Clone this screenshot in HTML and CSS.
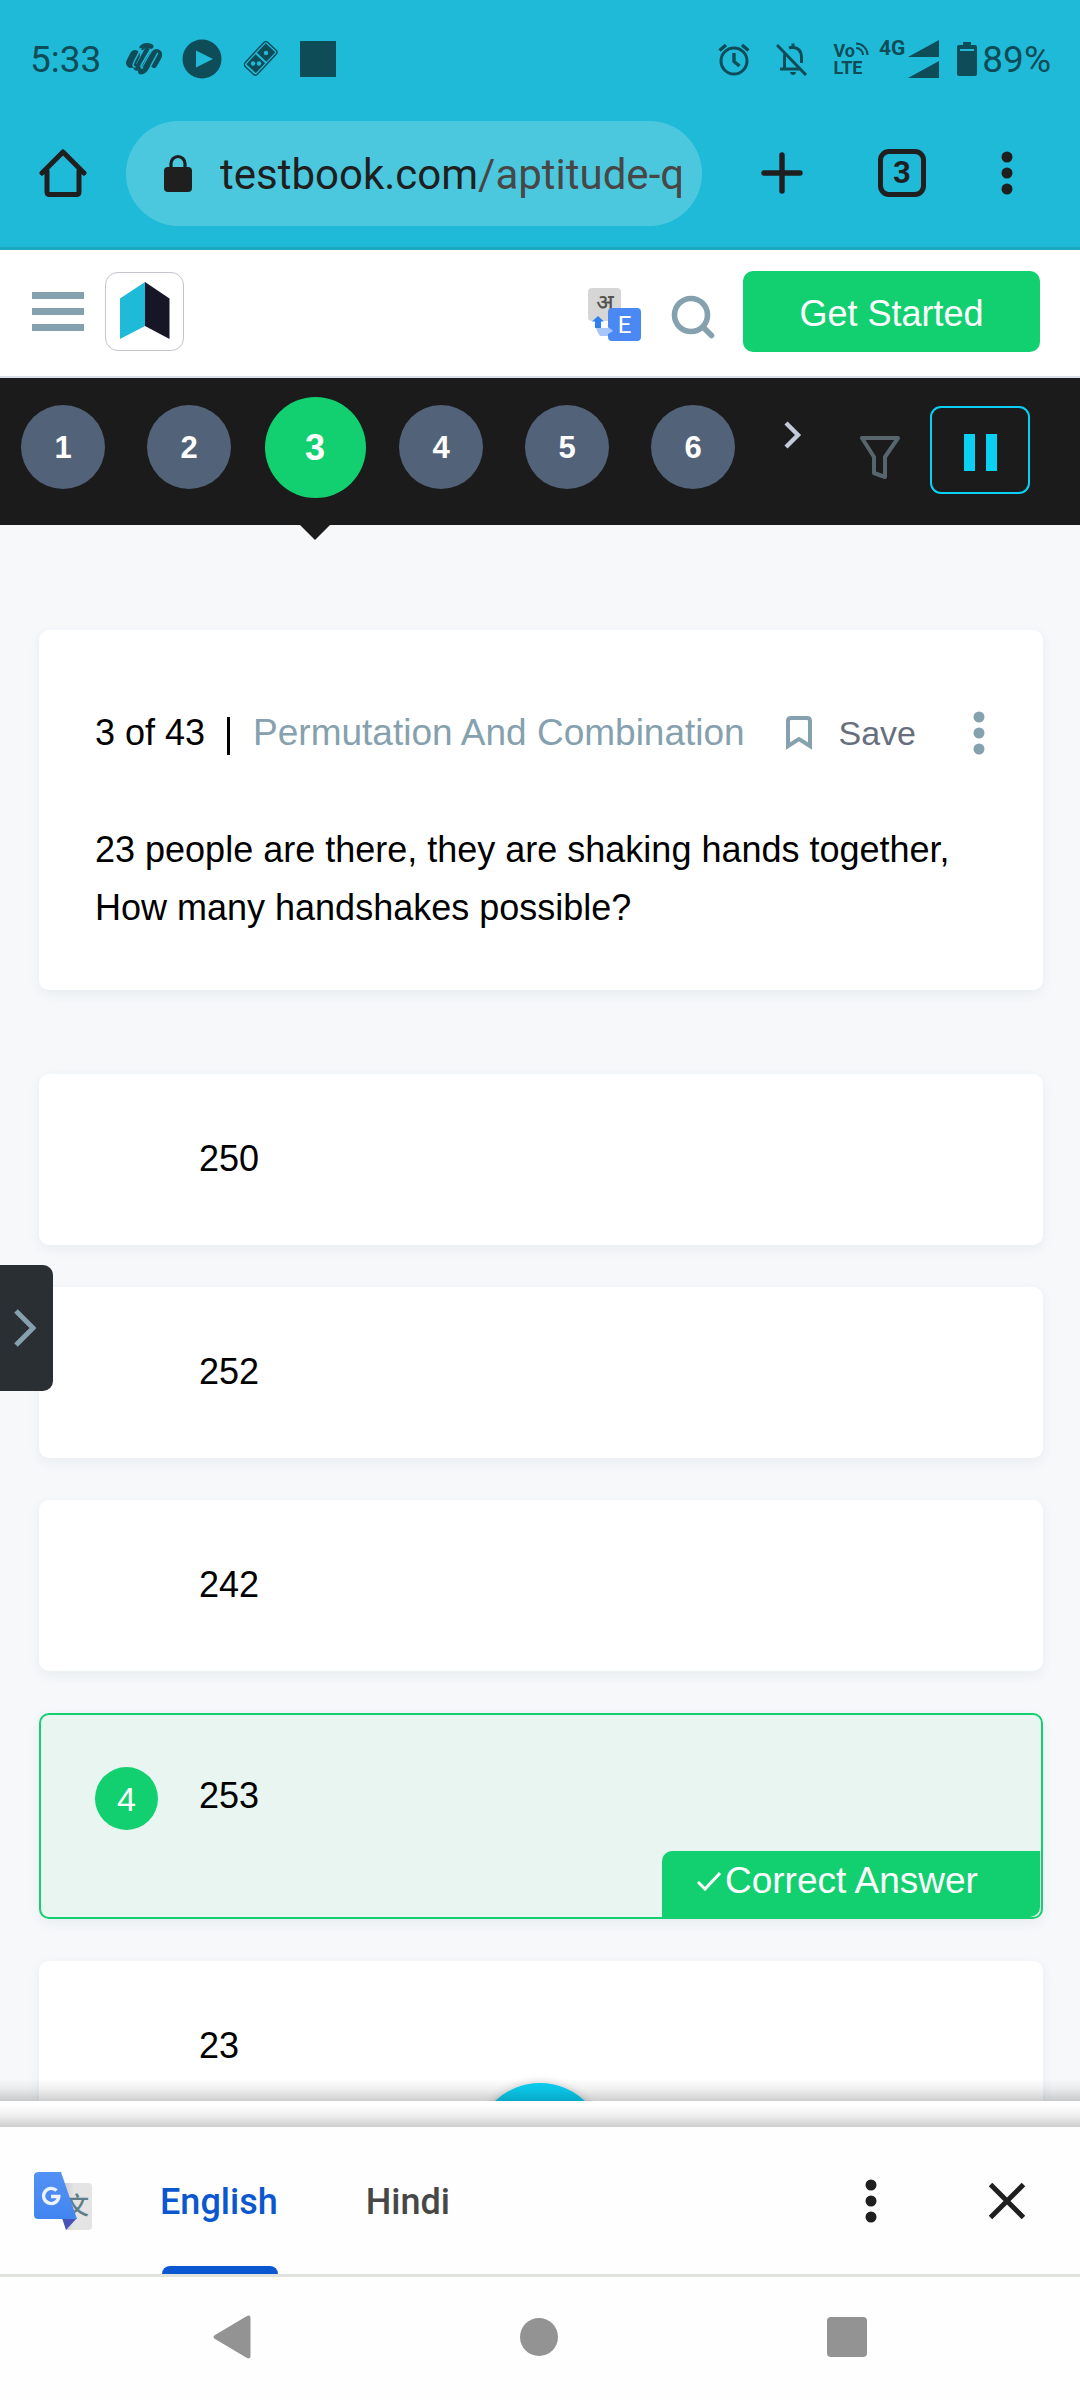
FILE: index.html
```html
<!DOCTYPE html>
<html lang="en">
<head>
<meta charset="utf-8">
<meta name="viewport" content="width=device-width, initial-scale=1">
<title>Permutation And Combination - Testbook</title>
<link rel="stylesheet" href="styles.css">
</head>
<body>
<div class="browser">
  <div class="status">
    <span class="clock">5:33</span>
    <svg class="status-swirl" width="36" height="32" viewBox="0 0 36 32" fill="none" stroke="currentColor" stroke-linecap="round" stroke-linejoin="round"><path d="M5 20 9 12" stroke-width="10"/><path d="M10 24q1 2 3-1L21 8" stroke-width="6"/><path d="M16 4.500q4-3.500 9-1" stroke-width="5"/><path d="M15 28.500q3 0 5-4L26.500 13q3-5 5.500-3.500t0 5.500L28 22" stroke-width="6"/><path d="M15 5.500 8.500 18q-3 6 .500 6M24.500 6.500 16.500 20q-3 5 0 5M31.500 10.500 25 22.500" stroke="#20bad9" stroke-width="1.500"/></svg>
    <svg class="status-play" width="40" height="40" viewBox="0 0 40 40"><circle cx="20" cy="20" r="19.500" fill="currentColor"/><path d="M14 11.500 31 20 14 28.500z" fill="#20bad9"/></svg>
    <svg class="status-domino" width="34" height="36" viewBox="0 0 34 36"><g transform="rotate(43 17 17)"><rect x="8.500" y="1" width="17" height="33" rx="3" fill="none" stroke="currentColor" stroke-width="1.400"/><rect x="10.500" y="3" width="13" height="13" fill="currentColor"/><rect x="10.500" y="18" width="13" height="13.500" fill="currentColor"/></g><g fill="#20bad9"><circle cx="22" cy="12" r="2.200"/><circle cx="9" cy="22.500" r="2.200"/><circle cx="15" cy="22.500" r="2.200"/></g></svg>
    <span class="status-square"></span>
    <span class="push"></span>
    <svg class="status-alarm" width="32" height="34" viewBox="0 0 32 34" fill="none" stroke="currentColor" stroke-width="3"><circle cx="16" cy="19" r="13"/><path d="M16 11v8.500l5.500 4.500M1.500 8.500 8 3M30.500 8.500 24 3" stroke-width="3.400"/></svg>
    <svg class="status-bell" width="32" height="34" viewBox="0 0 32 34" fill="none" stroke="currentColor" stroke-width="3"><path d="M1 3 30 33M4 27h21M8.500 27V14.500q0-2 .8-4M13 6q2-.8 3.500-.8Q25.500 6 25.500 15v6M17 1.500V6"/><path d="M14 30h6q-.5 3-3 3t-3-3z" fill="currentColor" stroke="none"/></svg>
    <span class="volte"><span class="volte-row">Vo<svg width="13" height="14" viewBox="0 0 13 14" fill="none" stroke="currentColor" stroke-width="2"><path d="M0 1.500A11.500 11.500 0 0 1 11.500 13M0 6a7 7 0 0 1 7 7"/></svg></span><span class="volte-row">LTE</span></span>
    <span class="network">4G</span>
    <svg class="status-signal" width="32" height="38" viewBox="0 0 32 38" fill="currentColor"><path d="M31 0v17H0zM31 21v17H0z"/></svg>
    <svg class="status-battery" width="20" height="34" viewBox="0 0 20 34"><path d="M6 0h8v3h4q2 0 2 2v27q0 2-2 2H2q-2 0-2-2V5q0-2 2-2h4z" fill="currentColor"/><path d="M3 8h14" stroke="#20bad9" stroke-width="2"/></svg>
    <span class="percent">89%</span>
  </div>
  <div class="toolbar">
    <button class="icon-btn home" aria-label="Home"><svg width="48" height="50" viewBox="0 0 48 50" fill="none" stroke="currentColor" stroke-width="5" stroke-linejoin="round" stroke-linecap="round"><path d="M3 25 24 4l21 21M8 23v21q0 2.500 2.500 2.500h27q2.500 0 2.500-2.500V23"/></svg></button>
    <button class="omnibox" aria-label="Address"><svg width="28" height="38" viewBox="0 0 28 38"><rect y="13" width="28" height="25" rx="4" fill="currentColor"/><path d="M7 15V9.500a7 7 0 0 1 14 0V15" fill="none" stroke="currentColor" stroke-width="3.200"/></svg><span class="url">testbook.com<span class="path">/aptitude-q</span></span></button>
    <button class="icon-btn plus" aria-label="New tab"><svg width="42" height="42" viewBox="0 0 42 42" stroke="currentColor" stroke-width="5.400" stroke-linecap="round"><path d="M3 21h36M21 3v36"/></svg></button>
    <button class="tabs-count" aria-label="Open tabs">3</button>
    <button class="icon-btn" aria-label="Browser menu"><svg width="12" height="44" viewBox="0 0 12 44" fill="currentColor"><circle cx="6" cy="6" r="5.500"/><circle cx="6" cy="22" r="5.500"/><circle cx="6" cy="38" r="5.500"/></svg></button>
  </div>
</div>

<header class="site-header">
  <button class="burger" aria-label="Menu"><span></span><span></span><span></span></button>
  <a class="logo" href="#" aria-label="Testbook"><svg width="50" height="58" viewBox="0 0 50 58"><path d="M0 16.500 25 0v44L0 57z" fill="#20bad9"/><path d="M25 0l24.500 16.500V57L25 44z" fill="#171626"/></svg></a>
  <span class="push"></span>
  <button class="lang" aria-label="Change language"><svg width="54" height="54" viewBox="0 0 54 54"><rect width="33" height="33" rx="4" fill="#d6d6d6"/><text x="17" y="22" text-anchor="middle" class="lang-hi">अ</text><path d="M10 28l6 5.500h-3V40H7v-6.500H4z" fill="#2f7ff0"/><path d="M8 40h12v-2l5 5-5 5h-8q-3-4-4-8z" fill="#a9c6f8"/><path d="M24 20h25q4 0 4 4v25q0 4-4 4H24q-4 0-4-4v-3l5-3-5-4V24q0-4 4-4z" fill="#4a89f3"/><text x="36.500" y="45" text-anchor="middle" class="lang-en">E</text></svg></button>
  <button class="icon-btn search" aria-label="Search"><svg width="44" height="44" viewBox="0 0 44 44" fill="none" stroke="#86a1ae" stroke-width="5.600" stroke-linecap="round"><circle cx="20" cy="20" r="16.500"/><path d="M32 32l8.500 8.500"/></svg></button>
  <a class="cta" href="#">Get Started</a>
</header>

<nav class="qnav" aria-label="Questions">
  <div class="qslot"><button class="qnum">1</button></div>
  <div class="qslot"><button class="qnum">2</button></div>
  <div class="qslot current"><button class="qnum">3</button></div>
  <div class="qslot"><button class="qnum">4</button></div>
  <div class="qslot"><button class="qnum">5</button></div>
  <div class="qslot"><button class="qnum">6</button></div>
  <button class="icon-btn next" aria-label="Next questions"><svg width="18" height="28" viewBox="0 0 18 28" fill="none" stroke="#c3cad8" stroke-width="4.400"><path d="M2 2l12 12L2 26"/></svg></button>
  <span class="push"></span>
  <button class="icon-btn filter" aria-label="Filter"><svg width="40" height="44" viewBox="0 0 40 44" fill="none" stroke="#57656d" stroke-width="4" stroke-linejoin="round"><path d="M2 2h36L25 21v20l-11-4V21z"/></svg></button>
  <button class="pause" aria-label="Pause"><span></span><span></span></button>
</nav>

<main class="content">
  <section class="card question">
    <div class="meta">
      <span>3 of 43</span><span class="bar"></span><span class="topic">Permutation And Combination</span>
      <span class="push"></span>
      <button class="save"><svg width="26" height="34" viewBox="0 0 26 34" fill="none" stroke="#86a1ae" stroke-width="4"><path d="M2 30V5q0-3 3-3h16q3 0 3 3v25l-11-7z"/></svg>Save</button>
      <button class="icon-btn" aria-label="Question menu"><svg width="12" height="44" viewBox="0 0 12 44" fill="#86a1ae"><circle cx="6" cy="6" r="5.500"/><circle cx="6" cy="22" r="5.500"/><circle cx="6" cy="38" r="5.500"/></svg></button>
    </div>
    <p class="prompt">23 people are there, they are shaking hands together, How many handshakes possible?</p>
  </section>
  <div class="options">
    <button class="card option">250</button>
    <button class="card option">252</button>
    <button class="card option">242</button>
    <button class="card option correct"><span class="badge">4</span>253<span class="tag"><svg width="24" height="20" viewBox="0 0 24 20" fill="none" stroke="currentColor" stroke-width="3"><path d="M1 11l7 7L23 2"/></svg>Correct Answer</span></button>
    <button class="card option">23</button>
  </div>
  <button class="drawer" aria-label="Open panel"><svg width="22" height="38" viewBox="0 0 22 38" fill="none" stroke="#86a1ae" stroke-width="5"><path d="M2 2l17 17L2 36"/></svg></button>
  <button class="fab" aria-label="More"></button>
  <div class="shade"></div>
</main>

<div class="sheet-edge"></div>
<div class="sheet">
  <svg class="gt" width="60" height="60" viewBox="0 0 60 60"><defs><linearGradient id="gb" x2="0" y2="1"><stop stop-color="#5491f5"/><stop offset="1" stop-color="#4285f0"/></linearGradient><linearGradient id="gg" x2="1"><stop stop-color="#c8c8c8"/><stop offset=".4" stop-color="#e4e4e4"/></linearGradient></defs><path d="M28 12h26q4 0 4 4v40q0 3-4 3H32z" fill="url(#gg)"/><text x="43" y="43" text-anchor="middle" class="gt-zh">文</text><path d="M28 47h15L32 59z" fill="#4553b8"/><path d="M5 1h22l16 47H4q-4 0-4-4V5q0-4 5-4z" fill="url(#gb)"/><path d="M22.500 19.500a7.600 7.600 0 1 0 2.300 6H17" fill="none" stroke="#eef2fb" stroke-width="3.400"/></svg>
  <div class="langs"><button class="lang-tab active">English</button><button class="lang-tab">Hindi</button></div>
  <span class="push"></span>
  <button class="icon-btn" aria-label="Translate menu"><svg width="12" height="44" viewBox="0 0 12 44" fill="currentColor"><circle cx="6" cy="6" r="5.500"/><circle cx="6" cy="22" r="5.500"/><circle cx="6" cy="38" r="5.500"/></svg></button>
  <button class="icon-btn close" aria-label="Close"><svg width="36" height="36" viewBox="0 0 36 36" stroke="currentColor" stroke-width="5"><path d="M1.500 1.500l33 33M34.500 1.500l-33 33"/></svg></button>
</div>

<div class="sysnav">
  <button class="icon-btn back" aria-label="Back"><svg width="38" height="44" viewBox="0 0 38 44" fill="#939393"><path d="M34 1q3.500-1.500 3.500 2v38q0 3.500-3.500 2L2 24q-3-2 0-4z"/></svg></button>
  <button class="icon-btn" aria-label="Home screen"><svg width="38" height="38" viewBox="0 0 38 38" fill="#939393"><circle cx="19" cy="19" r="19"/></svg></button>
  <button class="icon-btn" aria-label="Recent apps"><svg width="40" height="40" viewBox="0 0 40 40" fill="#939393"><rect width="40" height="40" rx="4"/></svg></button>
</div>
</body>
</html>
```
FILE: styles.css
```css
* { box-sizing: border-box; }

body {
  margin: 0;
  height: 100vh;
  display: flex;
  flex-direction: column;
  overflow: hidden;
  background: #fefefe;
  color: #000;
  font-family: "Liberation Sans", Arial, sans-serif;
  font-size: 36px;
}

button {
  margin: 0;
  padding: 0;
  border: 0;
  background: none;
  color: inherit;
  font: inherit;
}

svg { display: block; flex: none; }
.push { flex: 1; }
.icon-btn { display: flex; flex: none; }

/* Browser chrome */
.browser {
  flex: none;
  background: #20bad9;
  border-bottom: 3px solid #1ba8c0;
  color: #1f1f1f;
  font-family: Roboto, sans-serif;
}

.status {
  display: flex;
  align-items: center;
  height: 117px;
  padding: 0 29px 0 30px;
  color: #0e4c58;
}
.clock, .percent { font-size: 37px; line-height: 44px; padding-top: 2px; }
.status-swirl { margin-left: 25px; }
.status-play { margin-left: 20px; }
.status-domino { margin-left: 22px; }
.status-square { width: 36px; height: 36px; margin-left: 22px; background: currentColor; }
.status-bell { margin-left: 26px; }
.volte { margin-left: 25px; font-size: 18px; line-height: 17px; font-weight: 700; }
.volte-row { display: flex; gap: 1px; }
.network { align-self: flex-start; margin: 36px 0 0 10px; font-size: 21px; line-height: 24px; font-weight: 700; }
.status-signal { margin-left: 3px; }
.status-battery { margin-left: 17px; }
.percent { margin-left: 5px; }

.toolbar {
  display: flex;
  align-items: center;
  height: 130px;
  padding: 0 67px 18px 39px;
}
.omnibox {
  display: flex;
  flex: 1;
  align-items: center;
  gap: 28px;
  min-width: 0;
  height: 105px;
  margin: 0 59px 0 39px;
  padding: 0 21px 0 38px;
  border-radius: 53px;
  background: #4bc8de;
  text-align: left;
}
.url {
  flex: 1;
  min-width: 0;
  padding-top: 4px;
  overflow: hidden;
  white-space: nowrap;
  font-size: 42px;
  line-height: 56px;
}
.path { color: #474747; }
.tabs-count {
  width: 48px;
  height: 48px;
  margin: 0 75px;
  border: 5px solid #1f1f1f;
  border-radius: 11px;
  font-size: 31px;
  line-height: 38px;
  font-weight: 700;
  text-align: center;
}

/* Site header */
.site-header {
  display: flex;
  flex: none;
  align-items: center;
  height: 128px;
  padding: 0 40px 4px 32px;
  border-bottom: 2px solid #dbe0e8;
  background: #fff;
}
.burger { display: flex; flex-direction: column; gap: 9px; }
.burger span { width: 52px; height: 7px; background: #86a1ae; }
.logo {
  display: flex;
  align-items: center;
  justify-content: center;
  width: 79px;
  height: 79px;
  margin-left: 21px;
  border: 1px solid #c4c4cc;
  border-radius: 13px;
}
.lang { padding-top: 7px; }
.lang-hi { font: 500 22px "Noto Sans", sans-serif; fill: #55534f; }
.lang-en { font: 24px Roboto, sans-serif; fill: #fff; }
.search { margin: 12px 28px 0 29px; }
.cta {
  width: 297px;
  height: 81px;
  padding-top: 2px;
  border-radius: 10px;
  background: #12d06f;
  color: #fff;
  line-height: 81px;
  text-align: center;
  text-decoration: none;
}

/* Question strip */
.qnav {
  display: flex;
  flex: none;
  align-items: center;
  height: 147px;
  padding-right: 50px;
  background: #1b1b1b;
}
.qslot {
  position: relative;
  display: flex;
  flex: none;
  align-items: center;
  justify-content: center;
  width: 126px;
  height: 147px;
  padding-bottom: 9px;
}
.qnum {
  width: 84px;
  height: 84px;
  padding-top: 2px;
  border-radius: 50%;
  background: #526379;
  color: #fff;
  font-size: 31px;
  font-weight: 700;
}
.current .qnum { width: 101px; height: 101px; background: #12d06f; font-size: 36px; }
.current::after {
  content: "";
  position: absolute;
  z-index: 1;
  top: 100%;
  left: 50%;
  margin-left: -15px;
  border: 15px solid transparent;
  border-top-color: #1b1b1b;
  border-bottom: 0;
}
.next { margin: 0 0 34px 28px; }
.filter { margin: 12px 30px 0 0; }
.pause {
  display: flex;
  align-items: center;
  justify-content: center;
  gap: 11px;
  width: 100px;
  height: 88px;
  margin-bottom: 4px;
  padding-top: 6px;
  border: 2px solid #0ad0f4;
  border-radius: 11px;
}
.pause span { width: 11px; height: 37px; background: #0ad0f4; }

/* Question and answers */
.content {
  position: relative;
  flex: 1;
  min-height: 0;
  overflow: hidden;
  padding: 105px 37px 0 39px;
  background: #f6f8fa;
}
.card {
  border-radius: 10px;
  background: #fff;
  box-shadow: 0 4px 12px rgba(60, 100, 130, .07);
}
.question { padding: 78px 58px 53px 56px; }
.meta { display: flex; align-items: center; height: 50px; }
.bar { width: 3px; height: 38px; margin: 6px 23px 0 22px; background: #000; }
.topic { font-size: 37px; }
.topic { color: #86a1ae; }
.save { display: flex; align-items: center; gap: 27px; margin-right: 57px; color: #676f7e; font-size: 34px; }
.prompt { margin: 63px 0 0; line-height: 58px; }

.options { display: flex; flex-direction: column; gap: 42px; margin-top: 84px; }
.option {
  position: relative;
  height: 171px;
  padding: 0 0 2px 160px;
  text-align: left;
}
.correct {
  height: 206px;
  padding-bottom: 40px;
  border: 2px solid #12d06f;
  background: #e8f5f1;
  padding-left: 158px;
}
.badge {
  position: absolute;
  top: 52px;
  left: 54px;
  width: 63px;
  height: 63px;
  border-radius: 50%;
  background: #12d06f;
  color: #fff;
  font-size: 34px;
  line-height: 65px;
  text-align: center;
}
.tag {
  position: absolute;
  right: 1px;
  bottom: 0;
  display: flex;
  align-items: center;
  gap: 4px;
  width: 378px;
  height: 66px;
  padding: 0 0 6px 35px;
  border-radius: 10px 0;
  background: #12d06f;
  color: #fff;
  font-size: 37px;
}

.drawer {
  position: absolute;
  top: 740px;
  left: 0;
  display: flex;
  align-items: center;
  width: 53px;
  height: 126px;
  padding-left: 14px;
  border-radius: 0 10px 10px 0;
  background: #2a2f33;
}
.fab {
  position: absolute;
  bottom: -112px;
  left: 50%;
  width: 130px;
  height: 130px;
  margin-left: -65px;
  border-radius: 50%;
  background: #0ad0f4;
  box-shadow: 0 0 10px rgba(0, 0, 0, .2);
}
.shade {
  position: absolute;
  right: 0;
  bottom: 0;
  left: 0;
  height: 22px;
  background: linear-gradient(rgba(0, 0, 0, 0), rgba(0, 0, 0, .06) 45%, rgba(0, 0, 0, .19));
}

/* Translate sheet */
.sheet-edge {
  flex: none;
  height: 26px;
  background: linear-gradient(#fff 15%, #efefef 55%, #cecece);
}
.sheet {
  display: flex;
  flex: none;
  align-items: center;
  height: 150px;
  padding: 0 55px 0 34px;
  border-bottom: 3px solid #e0e2de;
  color: #1f1f1f;
}
.gt-zh { font: 500 24px "Noto Sans CJK SC", sans-serif; fill: #607d87; }
.langs { display: flex; align-self: stretch; gap: 88px; margin-left: 66px; }
.lang-tab {
  position: relative;
  padding-top: 3px;
  color: #474747;
  font-family: Roboto, sans-serif;
  font-size: 36px;
  font-weight: 500;
}
.active { color: #0b57d0; }
.active::after {
  content: "";
  position: absolute;
  right: 0;
  bottom: 0;
  left: 2px;
  height: 8px;
  border-radius: 8px 8px 0 0;
  background: #0b57d0;
}
.close { margin-left: 112px; }

/* System navigation */
.sysnav {
  display: flex;
  flex: none;
  align-items: center;
  justify-content: space-between;
  height: 123px;
  padding: 0 213px 3px;
}
```
